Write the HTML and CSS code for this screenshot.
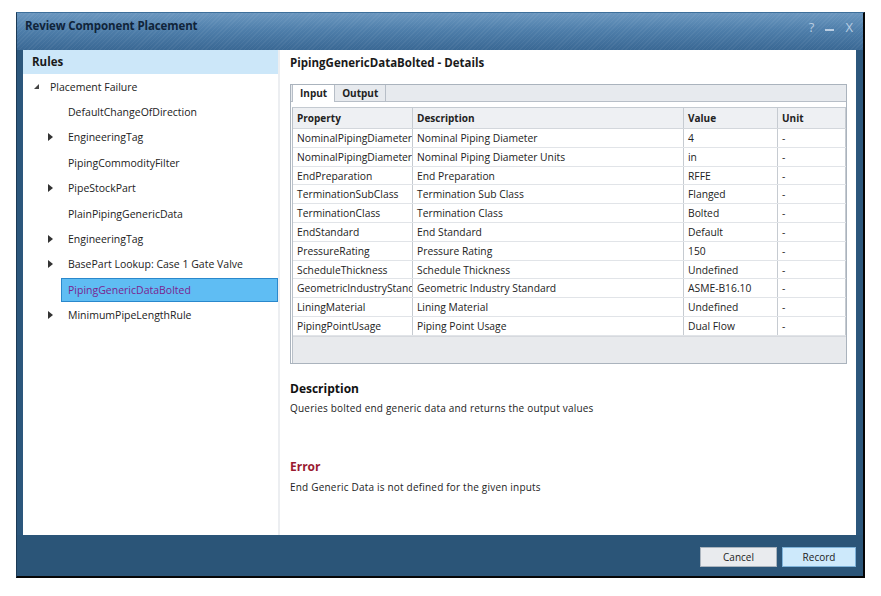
FILE: index.html
```html
<!DOCTYPE html>
<html>
<head>
<meta charset="utf-8">
<link rel="stylesheet" href="styles.css">
</head>
<body>
<div class="window">
  <div class="titlebar">
    <span class="title">Review Component Placement</span>
    <span class="controls"><span class="ctl">?</span><span class="ctl min"></span><span class="ctl">X</span></span>
  </div>
  <div class="content">
    <div class="left">
      <div class="rules-head">Rules</div>
      <ul class="tree">
        <li class="node l0"><span class="tri tri-d"></span><span class="lbl">Placement Failure</span></li>
        <li class="node l1"><span class="tri"></span><span class="lbl">DefaultChangeOfDirection</span></li>
        <li class="node l1"><span class="tri tri-r"></span><span class="lbl">EngineeringTag</span></li>
        <li class="node l1"><span class="tri"></span><span class="lbl">PipingCommodityFilter</span></li>
        <li class="node l1"><span class="tri tri-r"></span><span class="lbl">PipeStockPart</span></li>
        <li class="node l1"><span class="tri"></span><span class="lbl">PlainPipingGenericData</span></li>
        <li class="node l1"><span class="tri tri-r"></span><span class="lbl">EngineeringTag</span></li>
        <li class="node l1"><span class="tri tri-r"></span><span class="lbl">BasePart Lookup: Case 1 Gate Valve</span></li>
        <li class="node l1 sel"><span class="tri"></span><span class="lbl">PipingGenericDataBolted</span></li>
        <li class="node l1"><span class="tri tri-r"></span><span class="lbl">MinimumPipeLengthRule</span></li>
      </ul>
    </div>
    <div class="main">
      <div class="details-title">PipingGenericDataBolted - Details</div>
      <div class="tabbox">
        <div class="tabstrip">
          <span class="tab active">Input</span><span class="tab">Output</span>
        </div>
        <div class="tabpanel">
          <div class="grid">
            <div class="row head"><div class="c">Property</div><div class="c">Description</div><div class="c">Value</div><div class="c">Unit</div></div>
            <div class="row"><div class="c">NominalPipingDiameter</div><div class="c">Nominal Piping Diameter</div><div class="c">4</div><div class="c">-</div></div>
            <div class="row"><div class="c">NominalPipingDiameterUnits</div><div class="c">Nominal Piping Diameter Units</div><div class="c">in</div><div class="c">-</div></div>
            <div class="row"><div class="c">EndPreparation</div><div class="c">End Preparation</div><div class="c">RFFE</div><div class="c">-</div></div>
            <div class="row"><div class="c">TerminationSubClass</div><div class="c">Termination Sub Class</div><div class="c">Flanged</div><div class="c">-</div></div>
            <div class="row"><div class="c">TerminationClass</div><div class="c">Termination Class</div><div class="c">Bolted</div><div class="c">-</div></div>
            <div class="row"><div class="c">EndStandard</div><div class="c">End Standard</div><div class="c">Default</div><div class="c">-</div></div>
            <div class="row"><div class="c">PressureRating</div><div class="c">Pressure Rating</div><div class="c">150</div><div class="c">-</div></div>
            <div class="row"><div class="c">ScheduleThickness</div><div class="c">Schedule Thickness</div><div class="c">Undefined</div><div class="c">-</div></div>
            <div class="row"><div class="c">GeometricIndustryStandard</div><div class="c">Geometric Industry Standard</div><div class="c">ASME-B16.10</div><div class="c">-</div></div>
            <div class="row"><div class="c">LiningMaterial</div><div class="c">Lining Material</div><div class="c">Undefined</div><div class="c">-</div></div>
            <div class="row"><div class="c">PipingPointUsage</div><div class="c">Piping Point Usage</div><div class="c">Dual Flow</div><div class="c">-</div></div>
            <div class="filler"></div>
          </div>
        </div>
      </div>
      <div class="section desc">
        <div class="sec-head">Description</div>
        <div class="sec-text">Queries bolted end generic data and returns the output values</div>
      </div>
      <div class="section err">
        <div class="sec-head error">Error</div>
        <div class="sec-text">End Generic Data is not defined for the given inputs</div>
      </div>
    </div>
  </div>
  <div class="footer">
    <button class="btn cancel">Cancel</button>
    <button class="btn record">Record</button>
  </div>
</div>
</body>
</html>
```

FILE: styles.css
```css
html, body {
  margin: 0;
  padding: 0;
  background: #ffffff;
  font-family: "Open Sans", "Noto Sans", sans-serif;
  color: #1e1e1e;
}

.window {
  margin: 12px 0 0 16px;
  width: 849px;
  height: 566px;
  box-sizing: border-box;
  background: #2c577c;
  border-left: 1px solid #1b3a56;
  border-top: 1px solid #3d6f9a;
  border-right: 2px solid #050505;
  border-bottom: 2px solid #050505;
  display: flex;
  flex-direction: column;
}

.titlebar {
  height: 37px;
  flex: none;
  display: flex;
  align-items: flex-start;
  justify-content: space-between;
  padding: 5px 10px 0 8px;
  box-sizing: border-box;
  background:
    repeating-linear-gradient(135deg, rgba(255,255,255,0.05) 0 1px, rgba(255,255,255,0) 1px 3px),
    linear-gradient(#6b97bf, #4f7fab 45%, #3a6894);
}

.title {
  font-weight: 700;
  font-size: 11.5px;
  color: #10243a;
  letter-spacing: -0.1px;
}

.controls {
  display: flex;
  align-items: center;
  gap: 11px;
  color: #b9cde2;
  font-size: 13px;
  height: 18px;
}

.ctl.min {
  width: 9px;
  height: 2px;
  background: #b9cde2;
  margin-top: 6px;
}

.content {
  flex: none;
  height: 485px;
  margin: 0 7px 0 6px;
  background: #ffffff;
  display: flex;
}

.left {
  width: 255px;
  flex: none;
  border-right: 2px solid #eceef1;
}

.rules-head {
  height: 24px;
  line-height: 24px;
  background: #cce7f9;
  padding-left: 9px;
  font-weight: 700;
  font-size: 11.5px;
  color: #1a1a1a;
}

.tree {
  list-style: none;
  margin: 0;
  padding: 0;
}

.node {
  height: 25.4px;
  display: flex;
  align-items: center;
  font-size: 10.5px;
  color: #222;
}

.node .lbl {
  height: 22px;
  line-height: 22px;
  white-space: nowrap;
}

.node.l0 { padding-left: 9px; }
.node.l1 { padding-left: 24px; }

.tri {
  width: 15px;
  height: 8px;
  flex: none;
  position: relative;
}

.tri-d::before {
  content: "";
  position: absolute;
  left: 2px;
  top: 1px;
  border-style: solid;
  border-width: 0 0 5px 5px;
  border-color: transparent transparent #444 transparent;
}

.tri-r::before {
  content: "";
  position: absolute;
  left: 1px;
  top: 0;
  border-style: solid;
  border-width: 4px 0 4px 5px;
  border-color: transparent transparent transparent #333;
}

.l0 .lbl { padding-left: 3px; }
.l1 .lbl { padding-left: 6px; }

.node.sel .lbl {
  background: #5fbdf3;
  border: 1px solid #2a88cc;
  color: #7a2490;
  flex: 1;
  height: 24px;
  line-height: 22px;
  box-sizing: border-box;
  margin-left: -1px;
}

.main {
  flex: 1;
  padding: 0 9px 0 10px;
  display: flex;
  flex-direction: column;
}

.details-title {
  height: 26px;
  line-height: 26px;
  font-weight: 700;
  font-size: 11.5px;
  color: #1a1a1a;
  margin-bottom: 8px;
}

.tabbox {
  height: 280px;
  flex: none;
  box-sizing: border-box;
  border: 1px solid #aab3bd;
  display: flex;
  flex-direction: column;
  background: #fff;
}

.tabstrip {
  height: 17px;
  flex: none;
  background: #e7eaee;
  border-bottom: 1px solid #b7bec7;
  display: flex;
  align-items: flex-end;
  padding-left: 1px;
  box-sizing: border-box;
}

.tab {
  font-size: 10px;
  font-weight: 700;
  height: 16px;
  line-height: 16px;
  padding: 0 7px;
  color: #222;
  border-right: 1px solid #b7bec7;
}

.tab.active {
  background: #ffffff;
  border-left: 1px solid #b7bec7;
  height: 17px;
  margin-bottom: -1px;
}

.tabpanel {
  flex: 1;
  padding: 5px 0 0 1px;
  display: flex;
  flex-direction: column;
}

.grid {
  flex: 1;
  display: flex;
  flex-direction: column;
  border-left: 1px solid #b9c0c8;
  border-top: 1px solid #c4cad1;
}

.row {
  display: grid;
  grid-template-columns: 120px 271px 94px 68px;
  height: 18.8px;
  flex: none;
  border-bottom: 1px solid #e1e4e8;
  box-sizing: border-box;
  background: #fff;
}

.row.head {
  height: 21px;
  background: #eef0f3;
  border-bottom: 1px solid #d3d7dc;
}

.c {
  font-size: 10.3px;
  line-height: 19px;
  padding-left: 4px;
  white-space: nowrap;
  overflow: hidden;
  border-right: 1px solid #c6cbd1;
  color: #222;
}

.row.head .c {
  font-weight: 700;
  font-size: 10px;
  line-height: 20px;
}

.filler {
  flex: 1;
  background: #e8eaed;
  border-top: 1px solid #d6d9de;
}

.section {
  padding-top: 14px;
}

.sec-head {
  font-weight: 700;
  font-size: 12px;
  line-height: 22px;
  color: #111;
}

.sec-head.error {
  color: #9a1a30;
}

.sec-text {
  font-size: 10px;
  letter-spacing: 0.2px;
  line-height: 14px;
  color: #222;
  margin-top: 1px;
}

.section.err {
  padding-top: 41px;
}

.err .sec-text {
  margin-top: 2px;
}

.footer {
  flex: 1;
  display: flex;
  justify-content: flex-end;
  align-items: flex-start;
  gap: 5px;
  padding: 12px 7px 0 0;
  background: #2b5578;
}

.btn {
  height: 20px;
  font-family: "Open Sans", "Noto Sans", sans-serif;
  font-size: 10px;
  color: #222;
  padding: 0;
  border: 1px solid #aab4be;
}

.btn.cancel {
  width: 77px;
  background: #e9ebee;
}

.btn.record {
  width: 74px;
  background: #cde9fb;
  border-color: #7fb3d9;
}
```
